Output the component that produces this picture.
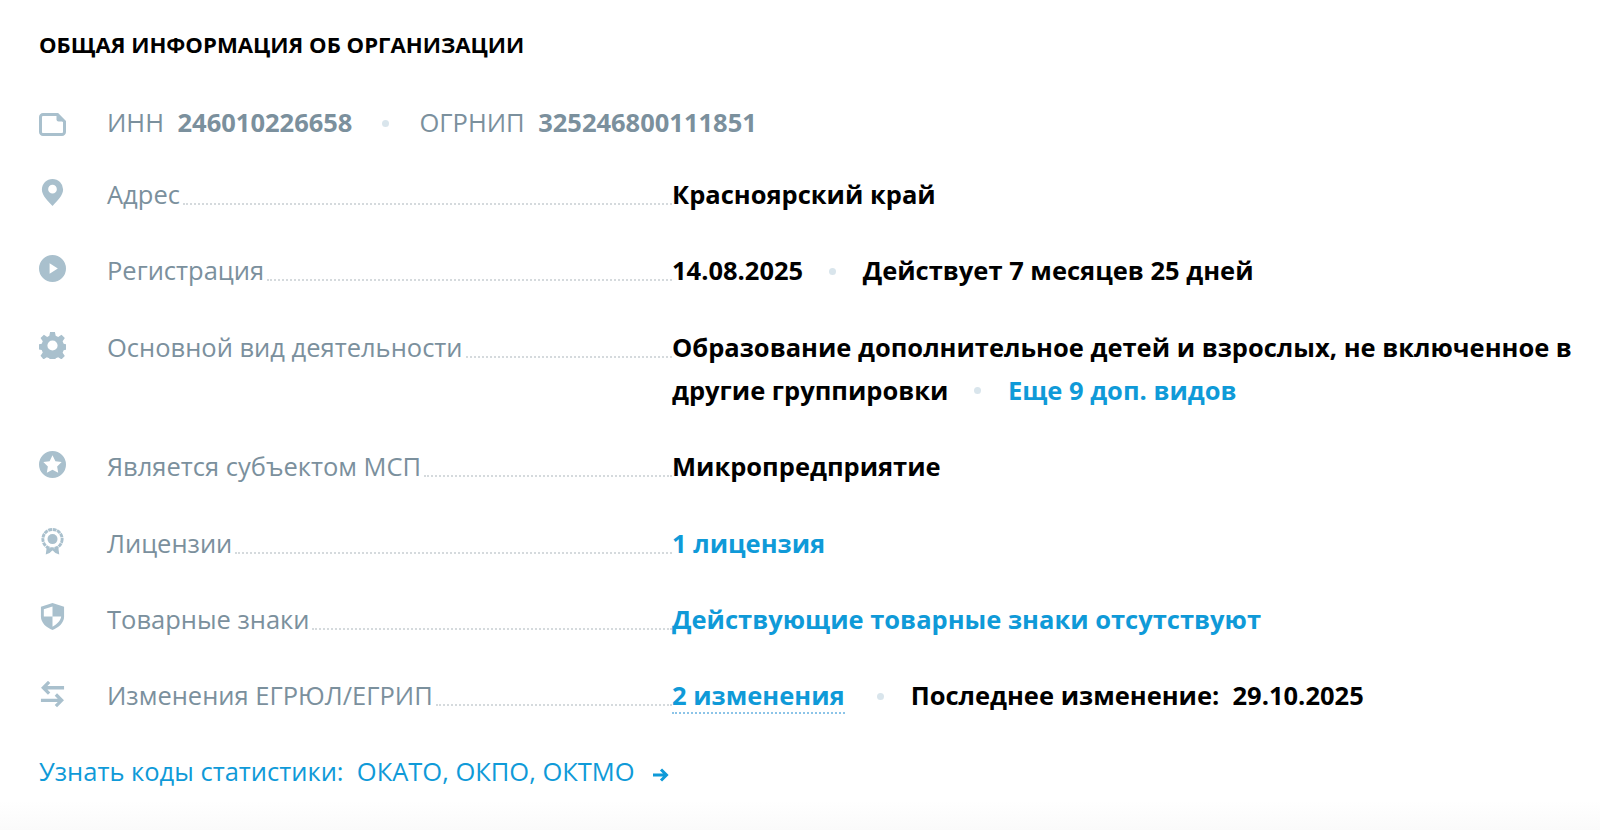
<div class="page">
  <h2 class="title">ОБЩАЯ ИНФОРМАЦИЯ ОБ ОРГАНИЗАЦИИ</h2>

  <div class="row ids">
    <svg class="icon doc" viewBox="0 0 27 23"><path d="M4 1.500h14.500l7 7V19A2.500 2.500 0 0 1 23 21.500H4A2.500 2.500 0 0 1 1.500 19V4A2.500 2.500 0 0 1 4 1.500z" fill="none" stroke="#a9c0cd" stroke-width="3"/><path d="M17.500 2v4.500a2 2 0 0 0 2 2H25z" fill="#a9c0cd"/></svg>
    <div class="ids-text">
      <span>ИНН</span><b>246010226658</b><i class="dot"></i><span>ОГРНИП</span><b>325246800111851</b>
    </div>
  </div>

  <div class="row">
    <svg class="icon" viewBox="0 0 28 28"><path fill-rule="evenodd" d="M14 0a11 11 0 0 1 11 11c0 6-6 12-11 17C9 23 3 17 3 11A11 11 0 0 1 14 0zm0 6a4.500 4.500 0 1 0 0 9 4.500 4.500 0 0 0 0-9z" fill="#a9c0cd"/></svg>
    <div class="label"><span>Адрес</span></div>
    <div class="value">Красноярский край</div>
  </div>

  <div class="row">
    <svg class="icon" viewBox="0 0 28 28"><path fill-rule="evenodd" d="M14 0a14 14 0 1 1 0 28 14 14 0 0 1 0-28zM11 8.500v11l8.500-5.500z" fill="#a9c0cd"/></svg>
    <div class="label"><span>Регистрация</span></div>
    <div class="value">14.08.2025<i class="dot"></i>Действует 7 месяцев 25 дней</div>
  </div>

  <div class="row">
    <svg class="icon" viewBox="0 0 28 28"><path fill-rule="evenodd" d="M11.500 0h5l.8 4 2.600 1.100 3.400-2.300 3.500 3.500-2.300 3.400 1.100 2.600 4 .8v5l-4 .8-1.100 2.600 2.300 3.400-3.500 3.500-3.400-2.300-2.600 1.100-.8 4h-5l-.8-4-2.600-1.100-3.400 2.300L1.600 24.700l2.300-3.400-1.100-2.600-4-.8v-5l4-.8 1.100-2.600-2.300-3.400L5.100 2.800l3.400 2.300 2.200-1.100zM14 8.700a5.300 5.300 0 1 0 0 10.600 5.300 5.300 0 0 0 0-10.600z" fill="#a9c0cd"/></svg>
    <div class="label"><span>Основной вид деятельности</span></div>
    <div class="value">Образование дополнительное детей и взрослых, не включенное в другие группировки<i class="dot"></i><a href="#more" class="link">Еще 9 доп. видов</a></div>
  </div>

  <div class="row">
    <svg class="icon" viewBox="0 0 28 28"><path fill-rule="evenodd" d="M14 0a14 14 0 1 1 0 28 14 14 0 0 1 0-28zm0 4.500l-3 6-6.500 1 4.700 4.600-1.100 6.500 5.900-3.100 5.900 3.100-1.100-6.500 4.700-4.600-6.500-1z" fill="#a9c0cd"/></svg>
    <div class="label"><span>Является субъектом МСП</span></div>
    <div class="value">Микропредприятие</div>
  </div>

  <div class="row">
    <svg class="icon" viewBox="0 0 28 28"><path d="M8 20l-1 7.500 4-1.500 3-3 3 3 4 1.500-1-7.500z" fill="#a9c0cd"/><circle cx="14" cy="11.500" r="10" fill="#fff" stroke="#a9c0cd" stroke-width="3" stroke-dasharray="4 .7"/><circle cx="14" cy="11.500" r="5.200" fill="#a9c0cd"/></svg>
    <div class="label"><span>Лицензии</span></div>
    <div class="value"><a href="#lic" class="link">1 лицензия</a></div>
  </div>

  <div class="row">
    <svg class="icon shield" viewBox="0 0 28 28"><path d="M14 0L2 4v10c0 7 6 11.500 12 14 6-2.500 12-7 12-14V4z" fill="#a9c0cd"/><path d="M14 3.500v10.500H5V6.500zM14 14h9c-.5 4.500-4.500 8-9 10.500z" fill="#fff"/></svg>
    <div class="label"><span>Товарные знаки</span></div>
    <div class="value"><a href="#tm" class="link">Действующие товарные знаки отсутствуют</a></div>
  </div>

  <div class="row last">
    <svg class="icon swap" viewBox="0 0 28 28"><path d="M26 7H5M10.500 1L4.500 7l6 6M2 20h21M17.500 14l6 6-6 6" fill="none" stroke="#a9c0cd" stroke-width="3.400"/></svg>
    <div class="label"><span>Изменения ЕГРЮЛ/ЕГРИП</span></div>
    <div class="value"><a href="#chg" class="link under">2 изменения</a><i class="dot"></i>Последнее изменение:&nbsp; 29.10.2025</div>
  </div>

  <a href="#stat" class="stat">
    Узнать коды статистики:&nbsp; ОКАТО, ОКПО, ОКТМО
    <svg class="arrow" viewBox="0 0 16 14"><path d="M0 7h13.500M8 1.500L13.500 7 8 12.500" fill="none" stroke="#0f9ad8" stroke-width="3"/></svg>
  </a>
</div>
<div class="shade"></div>

<style>
  :global(body) {
    margin: 0;
    background: #fff;
    font-family: "Open Sans", sans-serif;
  }

  .page {
    padding: 29px 20px 0 39px;
    height: 771px;
  }

  .title {
    margin: 0 0 42px;
    font-size: 22.15px;
    line-height: 30px;
    font-weight: 700;
    color: #000;
  }

  .row {
    display: flex;
    align-items: flex-start;
    margin-bottom: 33.4px;
    font-size: 25.5px;
    line-height: 43px;
  }

  .ids {
    margin-bottom: 29px;
  }

  .last {
    margin-bottom: 33px;
  }

  .icon {
    flex: none;
    width: 27px;
    height: 27px;
    margin: 6px 41px 0 0;
  }

  .doc {
    margin-top: 12px;
    height: 23px;
  }

  .shield {
    margin-top: 5px;
  }

  .swap {
    margin-top: 7px;
  }

  .ids-text {
    color: #7b909d;
  }

  .ids-text b {
    margin: 0 28px 0 13.5px;
    font-weight: 700;
  }

  .ids-text .dot {
    margin: 0 30px 4px 2px;
  }

  .label {
    flex: none;
    width: 565px;
    display: flex;
    color: #7b909d;
  }

  .label::after {
    content: "";
    flex: 1;
    margin: 0 0 11px 3px;
    border-bottom: 2px dotted #d5dadd;
  }

  .value {
    flex: 1;
    font-weight: 700;
    color: #000;
  }

  .link {
    color: #0f9ad8;
    text-decoration: none;
  }

  .under {
    border-bottom: 2px dotted #8cc4e8;
  }

  .dot {
    display: inline-block;
    width: 7px;
    height: 7px;
    margin: 0 26.5px 4px 26px;
    border-radius: 50%;
    background: #d9e5ec;
    vertical-align: middle;
  }

  .under + .dot {
    margin: 0 27px 4px 32px;
  }

  .stat {
    display: block;
    font-size: 25.5px;
    line-height: 43px;
    color: #0f9ad8;
    text-decoration: none;
  }

  .arrow {
    width: 16px;
    height: 14px;
    margin-left: 12px;
    vertical-align: -1px;
  }

  .shade {
    height: 30px;
    background: linear-gradient(#fff, #fafafa);
  }
</style>
